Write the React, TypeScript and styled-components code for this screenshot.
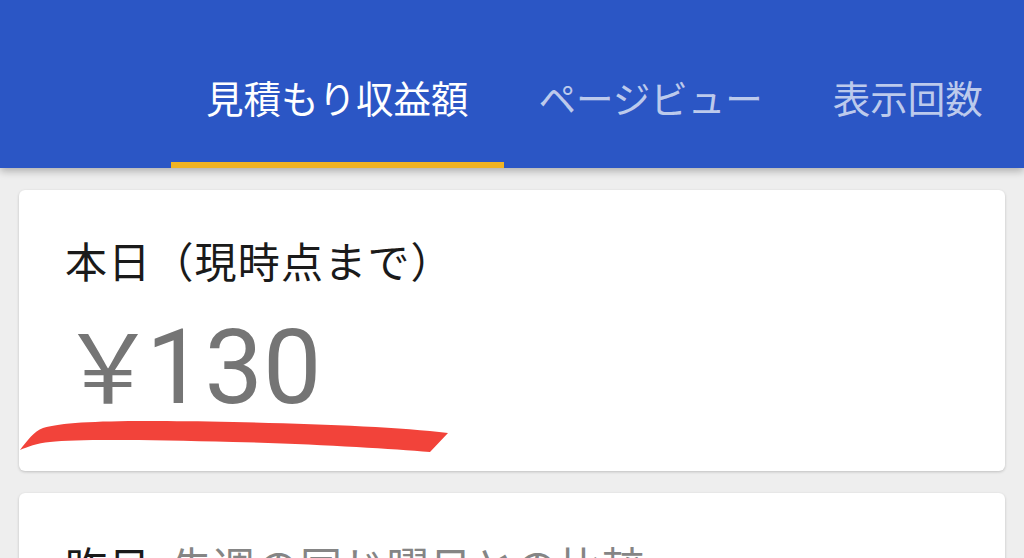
import React from 'react';
import styled, { createGlobalStyle } from 'styled-components';

const GlobalStyle = createGlobalStyle`
  html, body {
    margin: 0;
    padding: 0;
    background: #eeeeee;
    overflow: hidden;
  }
  body {
    font-family: Roboto, "Noto Sans CJK JP", sans-serif;
    text-spacing-trim: space-all;
  }
`;

const Page = styled.div`
  width: 1024px;
  height: 558px;
  overflow: hidden;
  background: #eeeeee;
`;

const Header = styled.header`
  position: relative;
  z-index: 1;
  height: 168px;
  background: #2b56c5;
  display: flex;
  align-items: flex-end;
  padding-left: 171px;
  box-sizing: border-box;
  box-shadow: 0 3px 8px rgba(0, 0, 0, 0.28);
`;

const Tab = styled.div<{ $active?: boolean }>`
  height: 132px;
  padding: 0 35px 6px;
  box-sizing: border-box;
  display: flex;
  align-items: center;
  font-size: 37.5px;
  white-space: nowrap;
  color: ${({ $active }) => ($active ? '#ffffff' : 'rgba(255, 255, 255, 0.7)')};
  border-bottom: 6px solid ${({ $active }) => ($active ? '#f0b323' : 'transparent')};
`;

const Content = styled.main`
  padding: 22px 19px 0;
  display: flex;
  flex-direction: column;
  gap: 22px;
`;

const Card = styled.section<{ $top: number; $bottom: number }>`
  position: relative;
  background: #ffffff;
  border-radius: 6px;
  box-shadow: 0 1px 3px rgba(0, 0, 0, 0.2);
  padding: ${({ $top, $bottom }) => `${$top}px 46px ${$bottom}px`};
`;

const Title = styled.h2`
  margin: 0;
  font-size: 42px;
  font-weight: 400;
  line-height: 1.2;
  letter-spacing: 1.2px;
  color: #1a1a1a;
  white-space: nowrap;
`;

const Note = styled.span`
  color: #858585;
  margin-left: 19px;
`;

const Amount = styled.div`
  margin-top: 25px;
  font-size: 104px;
  line-height: 1;
  color: #757575;
  display: flex;
  align-items: baseline;
`;

const Yen = styled.span`
  margin-left: -5px;
  letter-spacing: -10px;
  font-family: "Noto Sans CJK JP", sans-serif;
  font-size: 96px;
`;

const Marker = styled.svg`
  position: absolute;
  left: 0;
  top: 229px;
`;

export default function App() {
  return (
    <Page>
      <GlobalStyle />
      <Header>
        <Tab $active>見積もり収益額</Tab>
        <Tab>ページビュー</Tab>
        <Tab>表示回数</Tab>
      </Header>
      <Content>
        <Card $top={49} $bottom={51}>
          <Title>本日（現時点まで）</Title>
          <Amount>
            <Yen>￥</Yen>
            <span>130</span>
          </Amount>
          <Marker width="432" height="34" viewBox="0 0 432 34">
            <path
              d="M1,31 C8,22 15,12 24,9 C50,2 100,1 214,3 C300,5 380,8 429,14 L411,33 C370,30 300,25 214,23 C130,21 60,20 31,23 C18,24 8,28 1,31 Z"
              fill="#f2433a"
            />
          </Marker>
        </Card>
        <Card $top={51} $bottom={40}>
          <Title>
            昨日<Note>先週の同じ曜日との比較</Note>
          </Title>
        </Card>
      </Content>
    </Page>
  );
}
